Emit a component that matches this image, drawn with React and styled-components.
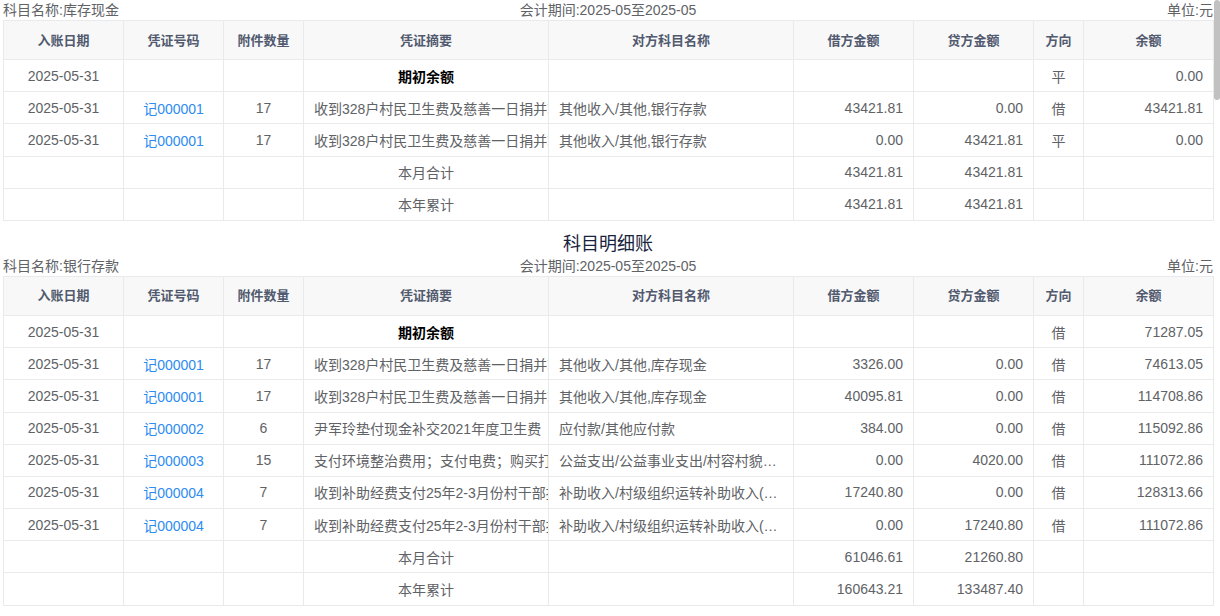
import React from 'react'
import styled, { createGlobalStyle } from 'styled-components'

const GlobalStyle = createGlobalStyle`
  html, body {
    margin: 0;
    padding: 0;
    background: #fff;
    overflow: hidden;
  }
  body {
    font-family: "Liberation Sans", "Noto Sans CJK SC", sans-serif;
  }
`

const Scroller = styled.div`
  position: relative;
  height: 100vh;
  overflow: hidden;
`

const ScrollThumb = styled.div`
  position: absolute;
  top: 0;
  right: 0;
  width: 6px;
  height: 100px;
  background: #c1c1c1;
  border-radius: 3px;
`

const Page = styled.div`
  padding: 0 7px 0 3px;
`

const Title = styled.div`
  padding-top: 11px;
  font-size: 18px;
  line-height: 24px;
  color: #17233d;
  text-align: center;
`

const InfoBar = styled.div`
  display: grid;
  grid-template-columns: 1fr auto 1fr;
  height: 20px;
  line-height: 20px;
  font-size: 14px;
  color: #606266;

  & span:last-child {
    text-align: right;
  }
`

const Table = styled.table`
  width: 1210px;
  table-layout: fixed;
  border-collapse: collapse;
  font-size: 14px;
  color: #606266;
`

const Th = styled.th`
  height: 36px;
  padding: 0 10px 2px;
  background: #f8f8f9;
  border: 1px solid #e8eaec;
  color: #515a6e;
  font-size: 13px;
  font-weight: bold;
  text-align: center;
`

const Td = styled.td`
  height: 31.2px;
  padding: 0 10px;
  border: 1px solid #e8eaec;
  white-space: nowrap;
  overflow: hidden;
  text-align: ${p => p.$align || 'left'};
  text-overflow: ${p => (p.$ellipsis ? 'ellipsis' : 'clip')};
`

const VoucherLink = styled.a`
  color: #2d8cf0;
  text-decoration: none;
  cursor: pointer;
`

const Strong = styled.span`
  font-weight: bold;
  color: #000;
`

const cols = [120, 100, 80, 245, 245, 120, 120, 50, 130]
const heads = ['入账日期', '凭证号码', '附件数量', '凭证摘要', '对方科目名称', '借方金额', '贷方金额', '方向', '余额']

const DATE = '2025-05-31'

const cashRows = [
  { date: DATE, summary: '期初余额', opening: true, dir: '平', balance: '0.00' },
  { date: DATE, no: '记000001', att: '17', summary: '收到328户村民卫生费及慈善一日捐并转存', other: '其他收入/其他,银行存款', debit: '43421.81', credit: '0.00', dir: '借', balance: '43421.81' },
  { date: DATE, no: '记000001', att: '17', summary: '收到328户村民卫生费及慈善一日捐并转存', other: '其他收入/其他,银行存款', debit: '0.00', credit: '43421.81', dir: '平', balance: '0.00' },
  { summary: '本月合计', total: true, debit: '43421.81', credit: '43421.81' },
  { summary: '本年累计', total: true, debit: '43421.81', credit: '43421.81' },
]

const bankRows = [
  { date: DATE, summary: '期初余额', opening: true, dir: '借', balance: '71287.05' },
  { date: DATE, no: '记000001', att: '17', summary: '收到328户村民卫生费及慈善一日捐并转存', other: '其他收入/其他,库存现金', debit: '3326.00', credit: '0.00', dir: '借', balance: '74613.05' },
  { date: DATE, no: '记000001', att: '17', summary: '收到328户村民卫生费及慈善一日捐并转存', other: '其他收入/其他,库存现金', debit: '40095.81', credit: '0.00', dir: '借', balance: '114708.86' },
  { date: DATE, no: '记000002', att: '6', summary: '尹军玲垫付现金补交2021年度卫生费', other: '应付款/其他应付款', debit: '384.00', credit: '0.00', dir: '借', balance: '115092.86' },
  { date: DATE, no: '记000003', att: '15', summary: '支付环境整治费用；支付电费；购买打印纸', other: '公益支出/公益事业支出/村容村貌整治', debit: '0.00', credit: '4020.00', dir: '借', balance: '111072.86' },
  { date: DATE, no: '记000004', att: '7', summary: '收到补助经费支付25年2-3月份村干部报酬', other: '补助收入/村级组织运转补助收入(村干部报酬)', debit: '17240.80', credit: '0.00', dir: '借', balance: '128313.66' },
  { date: DATE, no: '记000004', att: '7', summary: '收到补助经费支付25年2-3月份村干部报酬', other: '补助收入/村级组织运转补助收入(村干部报酬)', debit: '0.00', credit: '17240.80', dir: '借', balance: '111072.86' },
  { summary: '本月合计', total: true, debit: '61046.61', credit: '21260.80' },
  { summary: '本年累计', total: true, debit: '160643.21', credit: '133487.40' },
]

const LedgerTable = ({ subject, rows }) => (
  <>
    <InfoBar>
      <span>科目名称:{subject}</span>
      <span>会计期间:2025-05至2025-05</span>
      <span>单位:元</span>
    </InfoBar>
    <Table>
      <colgroup>
        {cols.map((w, i) => <col key={i} style={{ width: w }} />)}
      </colgroup>
      <thead>
        <tr>{heads.map(h => <Th key={h}>{h}</Th>)}</tr>
      </thead>
      <tbody>
        {rows.map((r, i) => (
          <tr key={i}>
            <Td $align="center">{r.date}</Td>
            <Td $align="center">{r.no && <VoucherLink>{r.no}</VoucherLink>}</Td>
            <Td $align="center">{r.att}</Td>
            <Td $align={r.opening || r.total ? 'center' : 'left'}>
              {r.opening ? <Strong>{r.summary}</Strong> : r.summary}
            </Td>
            <Td $ellipsis>{r.other}</Td>
            <Td $align="right">{r.debit}</Td>
            <Td $align="right">{r.credit}</Td>
            <Td $align="center">{r.dir}</Td>
            <Td $align="right">{r.balance}</Td>
          </tr>
        ))}
      </tbody>
    </Table>
  </>
)

export default function App() {
  return (
    <>
      <GlobalStyle />
      <Scroller>
        <Page>
          <LedgerTable subject="库存现金" rows={cashRows} />
          <Title>科目明细账</Title>
          <LedgerTable subject="银行存款" rows={bankRows} />
        </Page>
        <ScrollThumb />
      </Scroller>
    </>
  )
}
